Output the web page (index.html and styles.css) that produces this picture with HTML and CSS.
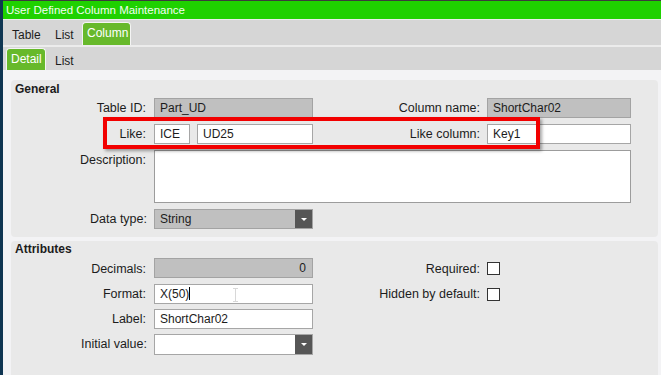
FILE: index.html
```html
<!DOCTYPE html>
<html lang="en">
<head>
    <meta charset="UTF-8">
    <title>User Defined Column Maintenance</title>
    <link rel="stylesheet" href="styles.css">
</head>
<body>
    <div class="edge"></div>
    <div class="main">
        <div class="title-bar">User Defined Column Maintenance</div>
        <div class="tab-strip">
            <span class="tab first">Table</span>
            <span class="tab second">List</span>
            <span class="tab active">Column</span>
        </div>
        <div class="tab-strip sub">
            <span class="tab active">Detail</span>
            <span class="tab second">List</span>
        </div>

        <div class="content">
            <div class="panel general">
                <div class="panel-title">General</div>
                <div class="form">
                    <label>Table ID:</label>
                    <div class="field disabled">Part_UD</div>
                    <label>Column name:</label>
                    <div class="field disabled">ShortChar02</div>

                    <label>Like:</label>
                    <div class="pair">
                        <div class="field short">ICE</div>
                        <div class="field grow">UD25</div>
                    </div>
                    <label>Like column:</label>
                    <div class="field">Key1</div>

                    <label class="top">Description:</label>
                    <div class="field area"></div>

                    <label>Data type:</label>
                    <div class="field disabled combo">String<span class="drop"></span></div>
                </div>
                <!-- highlight drawn over the Like row -->
                <div class="highlight"></div>
            </div>

            <div class="panel attributes">
                <div class="panel-title">Attributes</div>
                <div class="form">
                    <label>Decimals:</label>
                    <div class="field disabled num">0</div>
                    <label>Required:</label>
                    <div class="check"></div>

                    <label>Format:</label>
                    <div class="field">X(50)<span class="caret"></span><span class="ibeam"></span></div>
                    <label>Hidden by default:</label>
                    <div class="check"></div>

                    <label>Label:</label>
                    <div class="field">ShortChar02</div>
                    <span></span>
                    <span></span>

                    <label>Initial value:</label>
                    <div class="field combo"><span class="drop"></span></div>
                </div>
            </div>
        </div>
    </div>
</body>
</html>
```
FILE: styles.css
```css
body {
    margin: 0;
    display: flex;
    height: 375px;
    overflow: hidden;
    background: #f3f3f5;
    font-family: "Liberation Sans", Arial, sans-serif;
    font-size: 12px;
    color: #1c1c1c;
}
.edge {
    width: 3px;
    background: #0f3652;
    flex-shrink: 0;
}
.main {
    flex: 1;
    min-width: 0;
}
.title-bar {
    height: 18px;
    line-height: 18px;
    border-top: 1px solid #3c3c3c;
    border-bottom: 1px solid #ececec;
    background: #1fd100;
    color: #f2fff0;
    padding-left: 3px;
    font-size: 11.5px;
}
.tab-strip {
    height: 25px;
    background: #d6d6d6;
    display: flex;
    align-items: flex-end;
}
.tab-strip.sub {
    height: 23px;
    border-top: 2px solid #ececec;
    padding-left: 3px;
}
.tab {
    box-sizing: border-box;
    padding-bottom: 3px;
    color: #1c1c1c;
}
.tab.first {
    width: 46px;
    padding-left: 9px;
}
.tab.second {
    width: 33px;
    padding-left: 6px;
}
.tab.active {
    width: 49px;
    height: 23px;
    line-height: 21px;
    padding: 0 4px;
    background: #67b92b;
    color: #ffffff;
    border: 1px solid #f4f4f4;
    border-bottom: none;
    border-radius: 4px 4px 0 0;
}
.tab-strip.sub .tab.active {
    height: 22px;
    line-height: 20px;
    width: 40px;
}
.tab-strip.sub .tab.second {
    padding-left: 9px;
    padding-bottom: 2px;
}
.content {
    padding: 10px 3px 0 8px;
    display: flex;
    flex-direction: column;
    gap: 4px;
}
.panel {
    background: #e9e9e9;
    border-radius: 4px;
    position: relative;
}
.panel-title {
    font-weight: bold;
    padding: 2px 0 0 4px;
    line-height: 14px;
    margin-bottom: 2px;
}
.form {
    display: grid;
    grid-template-columns: 143px 159px 174px 144px;
    align-items: center;
}
.general .form {
    grid-template-rows: 20px 20px 53px 20px;
    row-gap: 6px;
    padding-bottom: 8px;
}
.attributes {
    height: 140px;
}
.attributes .panel-title {
    line-height: 13px;
}
.attributes .form {
    grid-template-rows: 21px 20px 20px 20px;
    row-gap: 5px;
    align-items: start;
}
label {
    text-align: right;
    padding-right: 8px;
    white-space: nowrap;
    font-size: 12.5px;
}
.form label:nth-of-type(even) {
    padding-right: 7px;
}
.attributes label {
    align-self: center;
}
label.top {
    align-self: start;
    padding-top: 3px;
}
.field {
    height: 20px;
    line-height: 18px;
    box-sizing: border-box;
    border: 1px solid #a6a6a6;
    background: #ffffff;
    padding: 0 5px;
    position: relative;
    white-space: nowrap;
}
.field.disabled {
    background: #c0c0c0;
    border-color: #a3a3a3;
}
.field.num {
    text-align: right;
    padding-right: 6px;
}
.field.area {
    height: 53px;
    grid-column: 2 / 5;
    border-color: #9c9c9c;
}
.attributes .field.combo {
    height: 21px;
}
.drop {
    position: absolute;
    right: 0;
    top: 0;
    bottom: 0;
    width: 17px;
    background: #565656;
}
.drop::after {
    content: "";
    position: absolute;
    left: 6px;
    top: 8px;
    border-left: 3px solid transparent;
    border-right: 3px solid transparent;
    border-top: 3px solid #ffffff;
}
.pair {
    display: flex;
    gap: 7px;
}
.field.short {
    width: 36px;
}
.field.grow {
    flex: 1;
}
.check {
    width: 13px;
    height: 13px;
    box-sizing: border-box;
    border: 1px solid #333333;
    background: #ffffff;
    align-self: center;
}
.caret {
    display: inline-block;
    width: 1px;
    height: 13px;
    background: #000000;
    vertical-align: -2px;
}
.ibeam {
    position: absolute;
    left: 80px;
    top: 3px;
    width: 1px;
    height: 14px;
    background: #d8d8d8;
}
.ibeam::before,
.ibeam::after {
    content: "";
    position: absolute;
    left: -2px;
    width: 5px;
    height: 1px;
    background: #d8d8d8;
}
.ibeam::before {
    top: 0;
}
.ibeam::after {
    bottom: 0;
}
.highlight {
    position: absolute;
    left: 92px;
    top: 37px;
    width: 437px;
    height: 32px;
    box-sizing: border-box;
    border: 4px solid #f20000;
    box-shadow: 2px 2px 3px rgba(0, 0, 0, 0.35);
}
```
